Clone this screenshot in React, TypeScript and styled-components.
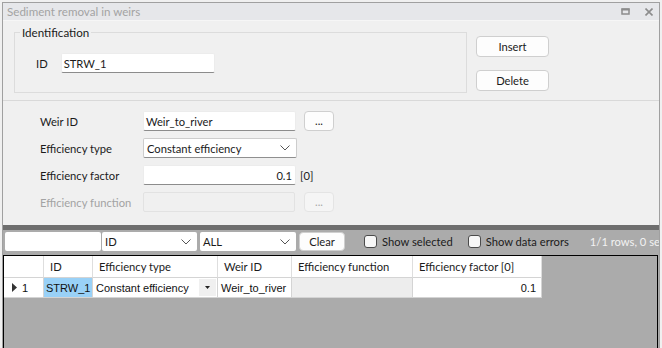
import React from 'react';
import styled, { createGlobalStyle } from 'styled-components';

const UI = `"Lato", "Liberation Sans", sans-serif`;
const GRID = `"Liberation Sans", Arial, sans-serif`;

const Global = createGlobalStyle`
  html, body { margin: 0; padding: 0; background: #f0f0f0; overflow: hidden; }
  #root { width: 662px; height: 348px; overflow: hidden; }
`;

const Window = styled.div`
  margin: 2px 0 0 2px;
  width: 658px;
  height: 360px;
  box-sizing: border-box;
  border: 1px solid #a0a0a0;
  background: #f0f0f0;
  display: flex;
  flex-direction: column;
  font-family: ${UI};
  font-size: 11.2px;
  color: #1b1b1b;
`;

const TitleBar = styled.div`
  flex: none;
  height: 17px;
  background: #e6e7ea;
  border-bottom: 1px solid #f6f6f6;
  display: flex;
  align-items: center;
  padding: 0 6px 0 4px;
  color: #a3a3a3;
  font-size: 11.6px;
`;

const Title = styled.span`
  flex: 1;
`;

const TitleIcons = styled.div`
  display: flex;
  align-items: center;
  gap: 15px;
`;

const TopSection = styled.div`
  flex: none;
  height: 80px;
  box-sizing: border-box;
  display: flex;
  align-items: flex-start;
  padding: 5px 0 0 11px;
  border-bottom: 1px solid #d9d9d9;
`;

const GroupBox = styled.fieldset`
  margin: 0;
  width: 453px;
  height: 67px;
  box-sizing: border-box;
  border: 1px solid #dcdcdc;
  padding: 0 0 0 5px;
`;

const Legend = styled.legend`
  padding: 0 2px;
  font-size: 11.6px;
  color: #1b1b1b;
`;

const IdRow = styled.div`
  display: flex;
  align-items: center;
  margin: 14px 0 0 16px;
  gap: 13px;
`;

const ButtonColumn = styled.div`
  display: flex;
  flex-direction: column;
  gap: 13px;
  margin: 10px 0 0 9px;
`;

const PushButton = styled.button<{ $w?: number; $h?: number; $ml?: number; $disabled?: boolean }>`
  flex: none;
  width: ${p => p.$w ?? 73}px;
  height: ${p => p.$h ?? 21}px;
  margin-left: ${p => p.$ml ?? 0}px;
  box-sizing: border-box;
  padding: 0;
  background: ${p => (p.$disabled ? '#f5f5f5' : '#fdfdfd')};
  border: 1px solid ${p => (p.$disabled ? '#e4e4e4' : '#cfcfcf')};
  border-radius: 4px;
  font-family: ${UI};
  font-size: 11.2px;
  color: ${p => (p.$disabled ? '#a8a8a8' : '#1b1b1b')};
  line-height: 1;
`;

const FormSection = styled.div`
  flex: none;
  height: 124px;
  box-sizing: border-box;
  padding: 10px 0 0 37px;
  display: flex;
  flex-direction: column;
  gap: 7px;
`;

const FormRow = styled.div`
  display: flex;
  align-items: center;
  height: 20px;
`;

const Label = styled.span<{ $disabled?: boolean }>`
  width: 103px;
  flex: none;
  color: ${p => (p.$disabled ? '#a3a3a3' : '#1b1b1b')};
`;

const TextBox = styled.div<{ $w: number; $align?: string; $disabled?: boolean }>`
  width: ${p => p.$w}px;
  height: 20px;
  box-sizing: border-box;
  flex: none;
  display: flex;
  align-items: center;
  justify-content: ${p => (p.$align === 'right' ? 'flex-end' : 'flex-start')};
  padding: 0 3px 0 2px;
  background: ${p => (p.$disabled ? '#f0f0f0' : '#ffffff')};
  border: 1px solid ${p => (p.$disabled ? '#e2e2e2' : '#ececec')};
  border-bottom-color: ${p => (p.$disabled ? '#e2e2e2' : '#8c8c8c')};
  border-radius: 2px;
  color: #1b1b1b;
`;

const ComboBox = styled.div<{ $w: number; $ml?: number }>`
  width: ${p => p.$w}px;
  height: 20px;
  margin-left: ${p => p.$ml ?? 0}px;
  box-sizing: border-box;
  flex: none;
  display: flex;
  align-items: center;
  padding: 0 6px 0 3px;
  background: #ffffff;
  border: 1px solid #cdcdcd;
  border-bottom-color: #8f8f8f;
  border-radius: 2px;
  color: #1b1b1b;
`;

const ComboText = styled.span`
  flex: 1;
`;

const Unit = styled.span`
  margin-left: 4px;
`;

const Spacer = styled.span<{ $w: number }>`
  width: ${p => p.$w}px;
  flex: none;
`;

const DarkBand = styled.div`
  flex: none;
  height: 5px;
  background: #6e6e6e;
`;

const Toolbar = styled.div`
  flex: none;
  height: 25px;
  box-sizing: border-box;
  background: #ababab;
  display: flex;
  align-items: flex-start;
  padding: 2px 0 0 2px;
  white-space: nowrap;
  overflow: hidden;
`;

const FilterInput = styled.div`
  width: 96px;
  height: 19px;
  flex: none;
  background: #ffffff;
  border-radius: 2px;
`;

const ToolCombo = styled(ComboBox)`
  height: 19px;
  border: none;
  border-radius: 2px;
`;

const CheckItem = styled.label<{ $ml: number }>`
  display: flex;
  align-items: center;
  height: 19px;
  margin-left: ${p => p.$ml}px;
  color: #1b1b1b;
  flex: none;
`;

const CheckBox = styled.span`
  width: 13px;
  height: 13px;
  box-sizing: border-box;
  border: 1px solid #4b4b4b;
  border-radius: 3px;
  background: #f7f7f7;
  margin-right: 5px;
`;

const Status = styled.span`
  margin-left: 21px;
  line-height: 19px;
  color: #f2f2f2;
  flex: none;
`;

const GridArea = styled.div`
  flex: 1;
  background: #ababab;
  padding: 0 1px 0 0;
  display: flex;
`;

const GridBox = styled.div`
  flex: 1;
  border: 1px solid #000000;
  border-bottom: none;
  background: #ababab;
`;

const Table = styled.div`
  display: grid;
  grid-template-columns: 40px 49px 125px 74px 121px 129px;
  grid-template-rows: 22px 20px;
  width: 538px;
`;

const HeadCell = styled.div`
  box-sizing: border-box;
  background: #ffffff;
  border-right: 1px solid #dedede;
  border-bottom: 1px solid #d4d4d4;
  display: flex;
  align-items: center;
  padding-left: 6px;
  font-family: ${UI};
  color: #1b1b1b;
  white-space: nowrap;
  overflow: hidden;
`;

const Cell = styled.div<{ $bg?: string; $align?: string; $pl?: number }>`
  box-sizing: border-box;
  background: ${p => p.$bg ?? '#ffffff'};
  border-right: 1px solid #d4d4d4;
  border-bottom: 1px solid #d4d4d4;
  display: flex;
  align-items: center;
  justify-content: ${p => (p.$align === 'right' ? 'flex-end' : 'flex-start')};
  padding: 0 5px 0 ${p => p.$pl ?? 3}px;
  font-family: ${GRID};
  font-size: 11px;
  color: #111111;
  white-space: nowrap;
  overflow: hidden;
`;

const RowHeader = styled(Cell)`
  padding-left: 8px;
  gap: 5px;
`;

const DropCell = styled(Cell)`
  padding-right: 1px;
`;

const DropButton = styled.span`
  margin-left: auto;
  width: 17px;
  height: 17px;
  background: #f0f0f0;
  display: flex;
  align-items: center;
  justify-content: center;
`;

const Chevron = () => (
  <svg width="10" height="6" viewBox="0 0 10 6">
    <polyline points="0.5,0.5 5,5 9.5,0.5" fill="none" stroke="#555" strokeWidth="1" />
  </svg>
);

export default function App() {
  return (
    <>
      <Global />
      <Window>
        <TitleBar>
          <Title>Sediment removal in weirs</Title>
          <TitleIcons>
            <svg width="9" height="7" viewBox="0 0 9 7">
              <rect x="1" y="1" width="7" height="5" fill="none" stroke="#8c8c8c" strokeWidth="1.5" />
              <rect x="0.5" y="0.5" width="8" height="2" fill="#8c8c8c" />
            </svg>
            <svg width="8" height="8" viewBox="0 0 8 8">
              <path d="M0.5 0.5 L7.5 7.5 M7.5 0.5 L0.5 7.5" stroke="#8c8c8c" strokeWidth="1.6" />
            </svg>
          </TitleIcons>
        </TitleBar>

        <TopSection>
          <GroupBox>
            <Legend>Identification</Legend>
            <IdRow>
              <span>ID</span>
              <TextBox $w={154}>STRW_1</TextBox>
            </IdRow>
          </GroupBox>
          <ButtonColumn>
            <PushButton>Insert</PushButton>
            <PushButton>Delete</PushButton>
          </ButtonColumn>
        </TopSection>

        <FormSection>
          <FormRow>
            <Label>Weir ID</Label>
            <TextBox $w={153}>Weir_to_river</TextBox>
            <Spacer $w={8} />
            <PushButton $w={30} $h={20}>...</PushButton>
          </FormRow>
          <FormRow>
            <Label>Efficiency type</Label>
            <ComboBox $w={154}>
              <ComboText>Constant efficiency</ComboText>
              <Chevron />
            </ComboBox>
          </FormRow>
          <FormRow>
            <Label>Efficiency factor</Label>
            <TextBox $w={153} $align="right">0.1</TextBox>
            <Unit>[0]</Unit>
          </FormRow>
          <FormRow>
            <Label $disabled>Efficiency function</Label>
            <TextBox $w={152} $disabled />
            <Spacer $w={9} />
            <PushButton $w={30} $h={20} $disabled>...</PushButton>
          </FormRow>
        </FormSection>

        <DarkBand />

        <Toolbar>
          <FilterInput />
          <ToolCombo $w={95} $ml={1}>
            <ComboText>ID</ComboText>
            <Chevron />
          </ToolCombo>
          <ToolCombo $w={96} $ml={3}>
            <ComboText>ALL</ComboText>
            <Chevron />
          </ToolCombo>
          <PushButton $w={46} $h={19} $ml={3}>Clear</PushButton>
          <CheckItem $ml={19}>
            <CheckBox />
            Show selected
          </CheckItem>
          <CheckItem $ml={15}>
            <CheckBox />
            Show data errors
          </CheckItem>
          <Status>1/1 rows, 0 selected</Status>
        </Toolbar>

        <GridArea>
          <GridBox>
            <Table>
              <HeadCell />
              <HeadCell>ID</HeadCell>
              <HeadCell>Efficiency type</HeadCell>
              <HeadCell>Weir ID</HeadCell>
              <HeadCell>Efficiency function</HeadCell>
              <HeadCell>Efficiency factor [0]</HeadCell>

              <RowHeader>
                <svg width="5" height="9" viewBox="0 0 5 9">
                  <polygon points="0,0 5,4.5 0,9" fill="#333" />
                </svg>
                1
              </RowHeader>
              <Cell $bg="#99d1f7" $pl={2}>STRW_1</Cell>
              <DropCell>
                Constant efficiency
                <DropButton>
                  <svg width="5" height="3" viewBox="0 0 5 3">
                    <polygon points="0,0 5,0 2.5,3" fill="#222" />
                  </svg>
                </DropButton>
              </DropCell>
              <Cell>Weir_to_river</Cell>
              <Cell $bg="#ededed" />
              <Cell $align="right">0.1</Cell>
            </Table>
          </GridBox>
        </GridArea>
      </Window>
    </>
  );
}
